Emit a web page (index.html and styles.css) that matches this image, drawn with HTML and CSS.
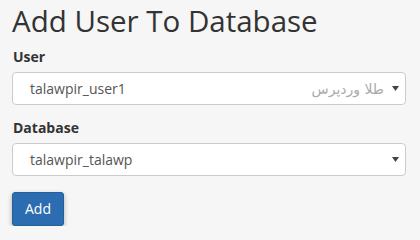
FILE: index.html
```html
<!DOCTYPE html>
<html>
<head>
<meta charset="utf-8">
<link rel="stylesheet" href="styles.css">
</head>
<body>
<div class="page">
  <h1 class="title">Add User To Database</h1>
  <form class="form">
    <div class="field">
      <label class="label">User</label>
      <div class="select">
        <span class="value">talawpir_user1</span>
        <span class="hint" dir="rtl">طلا وردپرس</span>
        <svg class="arrow" width="7" height="5" viewBox="0 0 7 5"><path d="M0 0h7L3.5 5z" fill="#444"/></svg>
      </div>
    </div>
    <div class="field">
      <label class="label">Database</label>
      <div class="select">
        <span class="value">talawpir_talawp</span>
        <svg class="arrow" width="7" height="5" viewBox="0 0 7 5"><path d="M0 0h7L3.5 5z" fill="#444"/></svg>
      </div>
    </div>
    <div class="actions">
      <button type="button" class="btn">Add</button>
    </div>
  </form>
</div>
</body>
</html>
```

FILE: styles.css
```css
html, body {
  margin: 0;
  padding: 0;
  background: #f6f6f6;
}
body {
  font-family: "Open Sans", "DejaVu Sans", sans-serif;
  color: #333;
}
.page {
  padding: 4px 14px 0 12px;
}
.title {
  margin: 0;
  font-size: 29.5px;
  font-weight: 400;
  line-height: 33px;
  color: #333;
}
.form {
  display: flex;
  flex-direction: column;
  margin-top: 10px;
}
.field {
  display: flex;
  flex-direction: column;
  margin-bottom: 13px;
}
.label {
  font-size: 14px;
  font-weight: 700;
  line-height: 20px;
  margin-bottom: 5px;
  padding-left: 1px;
}
.select {
  display: flex;
  align-items: center;
  height: 31px;
  border: 1px solid #ccc;
  border-radius: 4px;
  background: #fff;
  padding: 0 6px 0 17px;
  font-size: 14px;
  color: #555;
}
.value {
  flex: 1;
}
.hint {
  font-family: "DejaVu Sans", sans-serif;
  color: #aaa;
  font-size: 14px;
  margin-right: 8px;
}
.arrow {
  display: block;
  flex: none;
}
.actions {
  margin-top: 3px;
}
.btn {
  font-family: "Open Sans", sans-serif;
  font-size: 14px;
  line-height: 20px;
  padding: 6px 12px;
  border: 1px solid #255f9a;
  border-radius: 3px;
  background: #2b6db0;
  color: #fff;
  box-shadow: 0 2px 5px rgba(0,0,0,0.3);
}
```
